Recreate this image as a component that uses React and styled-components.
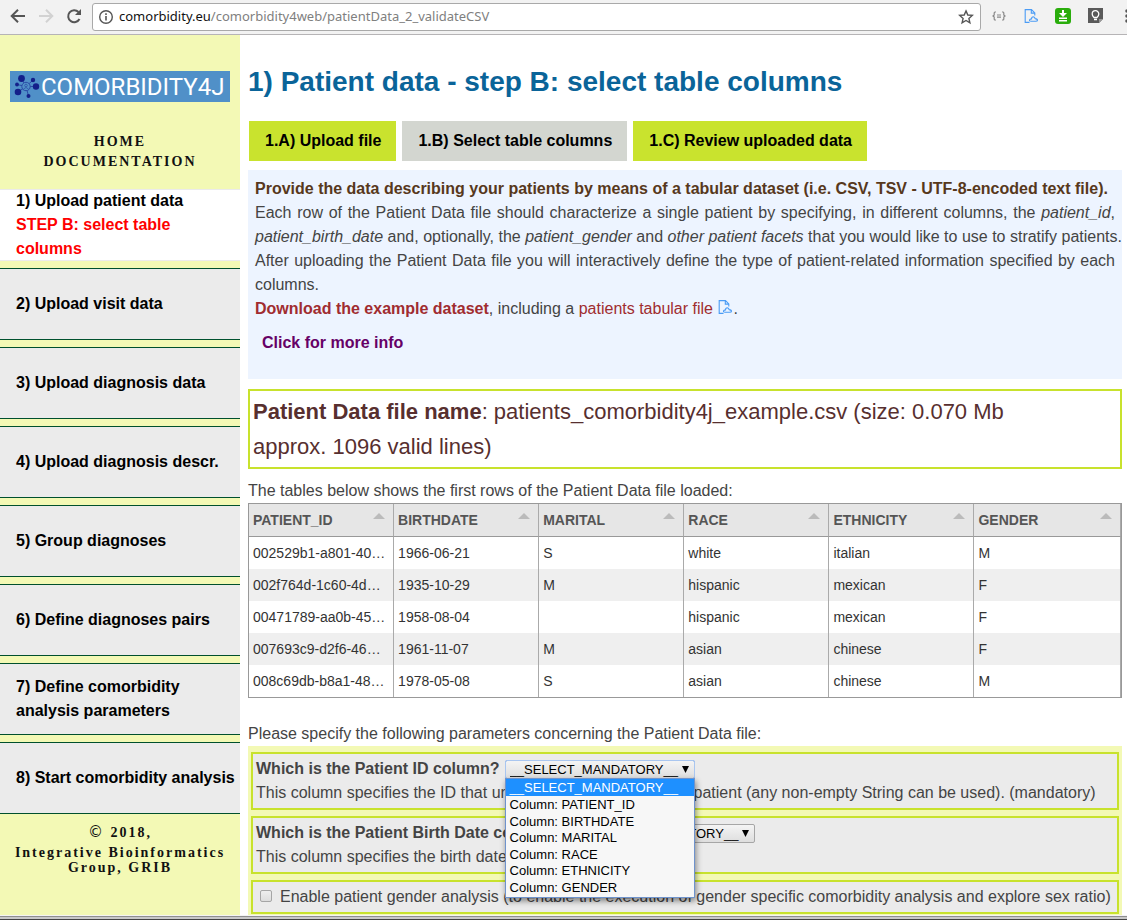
import React from "react";
import styled, { createGlobalStyle, css } from "styled-components";

const Global = createGlobalStyle`
  *, *::before, *::after { box-sizing: border-box; }
  body {
    margin: 0;
    background: #fff;
    color: #444;
    font: 16px/24px "Liberation Sans", Arial, sans-serif;
  }
  a { color: inherit; text-decoration: none; }
  h1, p, ul, nav { margin: 0; padding: 0; }
`;

const Shell = styled.div`
  display: flex;
  flex-direction: column;
  min-height: 100vh;
  overflow: hidden;
`;

/* Browser bar */
const Bar = styled.header`
  display: flex;
  align-items: center;
  height: 35px;
  padding: 0 0 3px 9px;
  overflow: hidden;
  background: #f2f2f2;
  border-bottom: 1px solid #b6b4b6;
`;

const BarButton = styled.button`
  display: flex;
  flex: none;
  align-items: center;
  justify-content: ${(p) => (p.$end ? "flex-end" : "center")};
  width: ${(p) => p.$width || 28}px;
  height: 24px;
  padding: 0;
  border: 0;
  background: none;
`;

const Address = styled.div`
  display: flex;
  flex: 1;
  align-items: center;
  height: 28px;
  margin: 2px 4px 0 8px;
  padding-left: 5px;
  border: 1px solid #a9a9a9;
  border-radius: 3px;
  background: #fff;
`;

const Url = styled.span`
  flex: 1;
  padding: 0 0 2px 5px;
  color: #808080;
  font: 13px/20px "Noto Sans", sans-serif;
  white-space: nowrap;
  b { color: #111; font-weight: 400; }
`;

/* Page frame */
const Page = styled.div`
  display: grid;
  flex: 1;
  grid-template-columns: 240px minmax(0, 1fr);
`;

const Side = styled.aside`
  display: flex;
  flex-direction: column;
  background: #f3f9b5;
`;

const LogoLink = styled.a`
  display: block;
  margin: 36px 10px 30px;
  height: 31px;
  svg { display: block; }
`;

const SideLinks = styled.nav`
  display: flex;
  flex-direction: column;
  align-items: center;
  margin-bottom: 17px;
  color: #111;
  font: bold 14px/20px "Liberation Serif", "Times New Roman", serif;
  letter-spacing: 2px;
`;

const Steps = styled.nav`
  display: flex;
  flex-direction: column;
  gap: 7px;
`;

const Step = styled.a`
  display: flex;
  flex-direction: column;
  justify-content: center;
  height: 72px;
  padding: 0 4px 0 16px;
  border: solid #00502d;
  border-width: 1px 0;
  background: #ebebeb;
  color: #000;
  font-weight: bold;
  ${(p) => p.$current && css`
    border-color: #ebebeb;
    background: #fff;
  `}
  em { color: #f00; font-style: normal; }
`;

const Credits = styled.footer`
  padding-top: 11px;
  color: #111;
  font: bold 14px/15px "Liberation Serif", "Times New Roman", serif;
  letter-spacing: 2px;
  text-align: center;
  p:first-child { margin-bottom: 5px; }
  span {
    font: 15px/14px "DejaVu Sans", sans-serif;
  }
`;

const Main = styled.main`
  padding: 0 5px 0 8px;
`;

const Title = styled.h1`
  margin: 29px 0 21px;
  color: #0a6499;
  font-size: 28px;
  line-height: 36px;
`;

const Tabs = styled.nav`
  display: flex;
  gap: 6px;
  margin: 0 0 9px 1px;
`;

const Tab = styled.button`
  height: 40px;
  padding: 0 15px 0 16px;
  border: 0;
  background: ${(p) => (p.$current ? "#d3d6d0" : "#c9e32e")};
  color: #000;
  font: bold 16px/24px "Liberation Sans", Arial, sans-serif;
`;

const Info = styled.section`
  margin-bottom: 10px;
  padding: 7px 7px 24px;
  background: #edf4ff;
  color: #444;
  strong { color: #57381c; }
  a, a strong { color: #a02c30; }
  svg { vertical-align: -1px; }
`;

const Line = styled.span`
  display: block;
  text-align: justify;
  text-align-last: ${(p) => (p.$last ? "left" : "justify")};
  white-space: nowrap;
`;

const MoreInfo = styled.button`
  display: block;
  margin-top: 10px;
  padding: 0 7px;
  border: 0;
  background: none;
  color: #660066;
  font: bold 16px/24px "Liberation Sans", Arial, sans-serif;
`;

const FileName = styled.p`
  && { margin-bottom: 10px; padding: 3px; }
  border: 2px solid #c8e22d;
  color: #572f2f;
  font-size: 22px;
  line-height: 35px;
`;

const Table = styled.table`
  width: 100%;
  margin: 0 0 24px;
  border: 1px solid #999;
  border-collapse: separate;
  border-spacing: 0;
  table-layout: fixed;
  font-size: 14px;
  line-height: 20px;
`;

const HeadCell = styled.th`
  width: 16.64%;
  height: 33px;
  padding: 0 8px 0 4px;
  border-right: 1px solid #aaa;
  border-bottom: 1px solid #999;
  background: #e6e6e6;
  color: #555;
  text-align: left;
  &:last-child { width: auto; }
  div {
    display: flex;
    align-items: center;
    justify-content: space-between;
  }
  i {
    margin-bottom: 8px;
    border: 6px solid transparent;
    border-top: 0;
    border-bottom-color: #bbb;
  }
`;

const Row = styled.tr`
  background: #fff;
  &:nth-child(even) { background: #efefef; }
`;

const Cell = styled.td`
  height: 32px;
  padding: 0 4px;
  overflow: hidden;
  border-right: 1px solid #aaa;
  color: #333;
  text-overflow: ellipsis;
  white-space: nowrap;
`;

const Form = styled.form`
  display: flex;
  flex-direction: column;
  gap: 6px;
  padding: 6px 3px 1px;
  background: #f3f9b5;
`;

const Field = styled.div`
  padding: 3px;
  border: 2px solid #c8e22d;
  background: #ebebeb;
`;

const FieldHead = styled.div`
  display: flex;
  align-items: center;
  gap: 5px;
  height: 24px;
  label { font-weight: bold; }
`;

const Picker = styled.div`
  position: relative;
  width: 190px;
  height: 20px;
  margin-top: 2px;
  select {
    display: block;
    width: 100%;
    height: 19px;
    padding: 0 4px;
    border: 1px solid ${(p) => (p.$open ? "#6f9ee0" : "#a6a6a6")};
    border-radius: 2px;
    outline: ${(p) => (p.$open ? "1px solid #a9c6f0" : "none")};
    outline-offset: -1px;
    appearance: none;
    background: linear-gradient(#f4f4f4, #dedede);
    color: #000;
    font: 13px/17px "Liberation Sans", Arial, sans-serif;
  }
  > svg { position: absolute; top: 6px; right: 6px; pointer-events: none; }
`;

const Options = styled.ul`
  position: absolute;
  z-index: 2;
  top: 18px;
  left: 0;
  width: 190px;
  border: 1px solid #6f93cc;
  background: #f7f7f7;
  box-shadow: 1px 3px 6px rgba(0, 0, 0, 0.45);
  list-style: none;
`;

const Option = styled.li`
  height: 17px;
  padding-left: 4px;
  background: ${(p) => (p.$active ? "#1e90ff" : "none")};
  color: ${(p) => (p.$active ? "#fff" : "#000")};
  font-size: 13px;
  line-height: 17px;
  &:nth-child(2n + 3) { height: 16px; }
  &:last-child { height: 18px; }
`;

const Check = styled.label`
  display: flex;
  align-items: center;
  height: 24px;
  padding-left: 4px;
  gap: 8px;
  white-space: nowrap;
  input {
    width: 12px;
    height: 12px;
    margin: 0 0 2px;
    border: 1px solid #a6a6a6;
    border-radius: 2px;
    appearance: none;
    background: linear-gradient(#eee, #ddd);
  }
`;

const WindowEdge = styled.div`
  height: 5px;
  border-top: 1px solid #f4f4f4;
  border-bottom: 1px solid #444;
  background: linear-gradient(#8f8f8f 1px, #c8c8c8 1px);
`;

const FileIcon = () => (
  <svg width="16" height="16" viewBox="0 0 16 16" fill="none" stroke="#4b9cf5" strokeWidth="1.1">
    <path d="M6.500 14.400H2.200V1.600h6.300l3.300 3.300v2.500M8.300 1.800v3.300h3.300" />
    <path d="M8 13.200q-1.700 0-1.500-1.200.3-1.100 2-1.100 0-2.200 1.900-2.200 1.500.1 1.700 1.900 2.500.4 2.400 1.600-.1 1-1.600 1z" />
  </svg>
);

const Logo = () => (
  <svg width="220" height="31" viewBox="0 0 220 31" role="img" aria-label="COMORBIDITY4J">
    <rect width="220" height="31" fill="#5090c8" />
    <g stroke="#2a4ba6" strokeWidth="1">
      <path d="M16 15.500 11.500 7.500M16 15.500 23 9M16 15.500 26 15.500M16 15.500 8 21M16 15.500 18.500 25M16 15.500 7 13.500" />
      <circle cx="16" cy="15.500" r="4.200" fill="#5090c8" />
      <circle cx="16" cy="14.500" r="1.300" fill="none" strokeWidth=".7" />
      <path d="M13.500 18q2.500-3 5 0" fill="none" strokeWidth=".7" />
    </g>
    <g fill="#14208a">
      <circle cx="11.500" cy="7.500" r="3.400" />
      <circle cx="23" cy="9" r="2.200" />
      <circle cx="26" cy="15.500" r="3.200" />
      <circle cx="8" cy="21" r="3.300" />
      <circle cx="18.500" cy="25" r="2" />
      <circle cx="7" cy="13.500" r="1.900" />
    </g>
    <text x="31" y="24" fill="#fff" fontFamily="Roboto, sans-serif" fontSize="24">COMORBIDITY4J</text>
  </svg>
);

const DownArrow = () => (
  <svg width="7" height="7" viewBox="0 0 7 7"><path d="M0 0h7L3.500 7z" fill="#000" /></svg>
);

const steps = [
  "2) Upload visit data",
  "3) Upload diagnosis data",
  "4) Upload diagnosis descr.",
  "5) Group diagnoses",
  "6) Define diagnoses pairs",
  "7) Define comorbidity analysis parameters",
  "8) Start comorbidity analysis",
];

const columns = ["PATIENT_ID", "BIRTHDATE", "MARITAL", "RACE", "ETHNICITY", "GENDER"];

const rows = [
  ["002529b1-a801-40…", "1966-06-21", "S", "white", "italian", "M"],
  ["002f764d-1c60-4d…", "1935-10-29", "M", "hispanic", "mexican", "F"],
  ["00471789-aa0b-45…", "1958-08-04", "", "hispanic", "mexican", "F"],
  ["007693c9-d2f6-46…", "1961-11-07", "M", "asian", "chinese", "F"],
  ["008c69db-b8a1-48…", "1978-05-08", "S", "asian", "chinese", "M"],
];

const options = ["__SELECT_MANDATORY__", ...columns.map((c) => `Column: ${c}`)];

const ColumnPicker = ({ id, open }) => (
  <Picker $open={open}>
    <select id={id} defaultValue={options[0]}>
      {options.map((o) => <option key={o}>{o}</option>)}
    </select>
    <DownArrow />
    {open && (
      <Options role="listbox" aria-label="Patient ID column">
        {options.map((o, i) => (
          <Option key={o} role="option" aria-selected={i === 0} $active={i === 0}>{o}</Option>
        ))}
      </Options>
    )}
  </Picker>
);

const BrowserBar = () => (
  <Bar>
    <BarButton $width={18} aria-label="Back">
      <svg width="16" height="16" viewBox="0 0 16 16" fill="none" stroke="#555" strokeWidth="2"><path d="M15 8H2M8 1.700 1.700 8 8 14.300" /></svg>
    </BarButton>
    <BarButton $width={37} aria-label="Forward">
      <svg width="16" height="16" viewBox="0 0 16 16" fill="none" stroke="#d2d2d2" strokeWidth="2"><path d="M1 8h13M8 1.700 14.300 8 8 14.300" /></svg>
    </BarButton>
    <BarButton $width={20} aria-label="Reload">
      <svg width="16" height="16" viewBox="0 0 16 16"><path d="M13.500 11A6 6 0 1 1 12.500 4" fill="none" stroke="#555" strokeWidth="2" /><path d="M15 1v6H9z" fill="#555" /></svg>
    </BarButton>
    <Address>
      <svg width="16" height="16" viewBox="0 0 16 16"><circle cx="8" cy="8" r="6.300" fill="none" stroke="#555" strokeWidth="1.400" /><path d="M7.200 7h1.600v4.500H7.200zM7.200 4.300h1.600v1.600H7.200z" fill="#555" /></svg>
      <Url><b>comorbidity.eu</b>/comorbidity4web/patientData_2_validateCSV</Url>
      <BarButton aria-label="Bookmark">
        <svg width="16" height="16" viewBox="0 0 16 16" fill="none" stroke="#555" strokeWidth="1.400"><path d="m8 1.900 1.800 4.100 4.500.4-3.400 3 1 4.400L8 11.500l-3.900 2.300 1-4.400-3.400-3 4.500-.4z" /></svg>
      </BarButton>
    </Address>
    <BarButton aria-label="JSON viewer">
      <svg width="14" height="10" viewBox="0 0 14 10" fill="none" stroke="#888" strokeWidth="1.200"><path d="M4 1H3Q2.200 1 2.200 2v2L1 5l1.200 1v2q0 1 .8 1h1M10 1h1q.8 0 .8 1v2L13 5l-1.200 1v2q0 1-.8 1h-1M5 4h4M5 6.200h4" /></svg>
    </BarButton>
    <BarButton $width={36} aria-label="Cloud file"><FileIcon /></BarButton>
    <BarButton aria-label="Download">
      <svg width="16" height="16" viewBox="0 0 16 16"><rect width="16" height="16" rx="3" fill="#2aad0c" /><path d="M7 2h2v3h3L8 9 4 5h3zM4 9.500h8V11H4zM4 12h8v1.500H4z" fill="#fff" /></svg>
    </BarButton>
    <BarButton $width={37} aria-label="Ideas">
      <svg width="15" height="15" viewBox="0 0 15 15"><path d="M0 0h15v11l-4 4H0z" fill="#5a5a5a" /><path d="M15 11h-4v4z" fill="#999" /><path d="M6 9.500Q4.200 8 4.200 6a3.300 3.300 0 0 1 6.600 0Q10.800 8 9 9.500zM6 11.500h3" fill="none" stroke="#fff" strokeWidth="1.300" /></svg>
    </BarButton>
    <BarButton $width={13} $end aria-label="Menu">
      <svg width="2" height="16" viewBox="0 0 2 16" fill="#555"><circle cx="2" cy="3" r="1.800" /><circle cx="2" cy="8" r="1.800" /><circle cx="2" cy="13" r="1.800" /></svg>
    </BarButton>
  </Bar>
);

export default function App() {
  return (
    <Shell>
      <Global />
      <BrowserBar />
      <Page>
        <Side>
          <LogoLink href="#home"><Logo /></LogoLink>
          <SideLinks>
            <a href="#home">HOME</a>
            <a href="#documentation">DOCUMENTATION</a>
          </SideLinks>
          <Steps>
            <Step href="#step1" $current>
              <span>1) Upload patient data</span>
              <em>STEP B: select table columns</em>
            </Step>
            {steps.map((s) => <Step key={s} href="#step">{s}</Step>)}
          </Steps>
          <Credits>
            <p><span>©</span> 2018,</p>
            <p>Integrative Bioinformatics Group, GRIB</p>
          </Credits>
        </Side>
        <Main>
          <Title>1) Patient data - step B: select table columns</Title>
          <Tabs>
            <Tab>1.A) Upload file</Tab>
            <Tab $current>1.B) Select table columns</Tab>
            <Tab>1.C) Review uploaded data</Tab>
          </Tabs>
          <Info>
            <p><strong>Provide the data describing your patients by means of a tabular dataset (i.e. CSV, TSV - UTF-8-encoded text file).</strong></p>
            <p>
              <Line>Each row of the Patient Data file should characterize a single patient by specifying, in different columns, the <i>patient_id</i>,</Line>
              <Line><i>patient_birth_date</i> and, optionally, the <i>patient_gender</i> and <i>other patient facets</i> that you would like to use to stratify patients.</Line>
              <Line>After uploading the Patient Data file you will interactively define the type of patient-related information specified by each</Line>
              <Line $last>columns.</Line>
            </p>
            <p>
              <a href="#example"><strong>Download the example dataset</strong></a>, including a <a href="#file">patients tabular file <FileIcon /></a>.
            </p>
            <MoreInfo>Click for more info</MoreInfo>
          </Info>
          <FileName>
            <strong>Patient Data file name</strong>: patients_comorbidity4j_example.csv (size: 0.070 Mb<br />
            approx. 1096 valid lines)
          </FileName>
          <p>The tables below shows the first rows of the Patient Data file loaded:</p>
          <Table>
            <thead>
              <tr>{columns.map((c) => <HeadCell key={c}><div>{c}<i /></div></HeadCell>)}</tr>
            </thead>
            <tbody>
              {rows.map((r) => (
                <Row key={r[0]}>{r.map((v, i) => <Cell key={i}>{v}</Cell>)}</Row>
              ))}
            </tbody>
          </Table>
          <p>Please specify the following parameters concerning the Patient Data file:</p>
          <Form>
            <Field>
              <FieldHead>
                <label htmlFor="patient-id">Which is the Patient ID column?</label>
                <ColumnPicker id="patient-id" open />
              </FieldHead>
              <p>This column specifies the ID that univocally identifies a single patient (any non-empty String can be used). (mandatory)</p>
            </Field>
            <Field>
              <FieldHead>
                <label htmlFor="birth-date">Which is the Patient Birth Date column?</label>
                <ColumnPicker id="birth-date" />
              </FieldHead>
              <p>This column specifies the birth date</p>
            </Field>
            <Field>
              <Check>
                <input type="checkbox" />
                Enable patient gender analysis (to enable the execution of gender specific comorbidity analysis and explore sex ratio)
              </Check>
            </Field>
          </Form>
        </Main>
      </Page>
      <WindowEdge />
    </Shell>
  );
}
